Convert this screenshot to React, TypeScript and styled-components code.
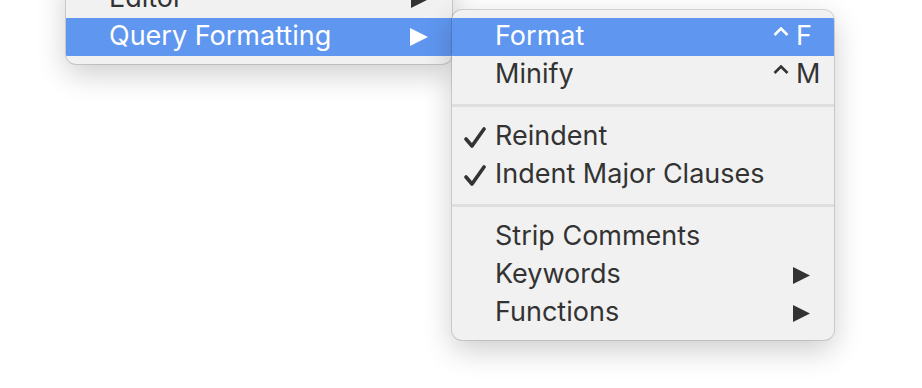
import React from "react";
import styled, { createGlobalStyle } from "styled-components";

const GlobalStyle = createGlobalStyle`
  html, body {
    margin: 0;
    padding: 0;
    background: #ffffff;
  }
  body {
    font-family: Inter, "Liberation Sans", sans-serif;
    overflow: hidden;
  }
`;

const Scene = styled.div`
  display: flex;
  align-items: flex-start;
  width: 922px;
  height: 388px;
  padding-left: 66px;
  box-sizing: border-box;
  overflow: hidden;
`;

const Menu = styled.div<{ $top: number; $width: number; $front?: boolean }>`
  position: relative;
  z-index: ${(p) => (p.$front ? 2 : 1)};
  width: ${(p) => p.$width}px;
  margin-top: ${(p) => p.$top}px;
  padding: 8px 0;
  background: #f1f1f1;
  border-radius: 10px;
  overflow: hidden;
  box-shadow: 0 0 0 1px rgba(0, 0, 0, 0.13), 0 10px 30px rgba(0, 0, 0, 0.2);
`;

const Row = styled.div<{ $active?: boolean }>`
  display: flex;
  align-items: center;
  height: 38px;
  padding-right: 24px;
  background: ${(p) => (p.$active ? "#5f96ef" : "transparent")};
  color: ${(p) => (p.$active ? "#ffffff" : "#333333")};
  font-size: 27px;
  line-height: 38px;
`;

const CheckCol = styled.span`
  display: flex;
  align-items: center;
  width: 43px;
  padding-left: 12px;
  box-sizing: border-box;
  flex-shrink: 0;
`;

const Label = styled.span`
  flex: 1;
  white-space: nowrap;
  margin-top: -2px;
`;

const RightSlot = styled.span`
  display: flex;
  align-items: center;
  justify-content: flex-end;
  width: 37px;
  flex-shrink: 0;
  white-space: nowrap;
`;

const Shortcut = styled.span`
  display: flex;
  align-items: center;
  gap: 7px;
  width: 37px;
  margin-top: -2px;
  overflow: visible;

  svg {
    flex-shrink: 0;
  }
`;

const Separator = styled.div`
  height: 3px;
  margin: 10px 0 11px;
  background: #dfdfdf;
`;

const Caret = ({ color }: { color: string }) => (
  <svg width="16" height="9" viewBox="0 0 16 9" style={{ marginTop: -10 }}>
    <polyline points="1.5,8 8,1.5 14.5,8" fill="none" stroke={color} strokeWidth="2.6" />
  </svg>
);

const Arrow = ({ color, size = 18 }: { color: string; size?: number }) => (
  <svg width={size} height={size} viewBox="0 0 18 18">
    <polygon points="0,0 18,9 0,18" fill={color} />
  </svg>
);

const Check = () => (
  <svg width="22" height="21" viewBox="0 0 22 21">
    <path d="M2 12 L8 19 L20 2" fill="none" stroke="#333" strokeWidth="3.6" strokeLinejoin="round" strokeLinecap="round" />
  </svg>
);

type Item = {
  label: string;
  checked?: boolean;
  active?: boolean;
  shortcut?: string;
  submenu?: boolean;
};

const MenuRow = ({ item }: { item: Item }) => {
  const fg = item.active ? "#ffffff" : "#333333";
  return (
    <Row $active={item.active}>
      <CheckCol>{item.checked && <Check />}</CheckCol>
      <Label>{item.label}</Label>
      <RightSlot>
        {item.shortcut && (
          <Shortcut>
            <Caret color={fg} />
            <span>{item.shortcut}</span>
          </Shortcut>
        )}
        {item.submenu && <Arrow color={fg} size={item.active ? 18 : 17} />}
      </RightSlot>
    </Row>
  );
};

const groups: Item[][] = [
  [
    { label: "Format", active: true, shortcut: "F" },
    { label: "Minify", shortcut: "M" },
  ],
  [
    { label: "Reindent", checked: true },
    { label: "Indent Major Clauses", checked: true },
  ],
  [
    { label: "Strip Comments" },
    { label: "Keywords", submenu: true },
    { label: "Functions", submenu: true },
  ],
];

export default function App() {
  return (
    <>
      <GlobalStyle />
      <Scene>
        <Menu $top={-28} $width={386}>
          <MenuRow item={{ label: "Editor", submenu: true }} />
          <MenuRow item={{ label: "Query Formatting", submenu: true, active: true }} />
        </Menu>
        <Menu $top={10} $width={382} $front>
          {groups.map((g, i) => (
            <React.Fragment key={i}>
              {i > 0 && <Separator />}
              {g.map((item) => (
                <MenuRow key={item.label} item={item} />
              ))}
            </React.Fragment>
          ))}
        </Menu>
      </Scene>
    </>
  );
}
